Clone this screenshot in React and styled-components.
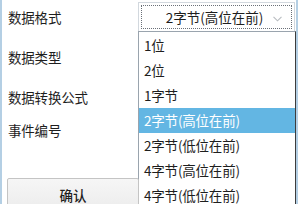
import React from "react";
import styled, { createGlobalStyle } from "styled-components";

const Global = createGlobalStyle`
  html, body { margin: 0; padding: 0; background: #fff; }
  body { font-family: "Noto Sans CJK SC", "Noto Sans", sans-serif; }
`;

const Page = styled.div`
  position: relative;
  width: 298px;
  height: 204px;
  overflow: hidden;
  background: #fff;
  box-sizing: border-box;
  border-left: 2px solid #b4cfe4;
  border-right: 2px solid #b4cfe4;
`;

const Form = styled.div`
  display: grid;
  grid-template-columns: 130px 1fr;
  padding: 2px 1px 0 6px;
`;

const Label = styled.div`
  height: ${(p) => p.h}px;
  display: flex;
  align-items: center;
  font-size: 13.5px;
  color: #1e1e1e;
  letter-spacing: -0.2px;
`;

const Labels = styled.div`
  display: flex;
  flex-direction: column;
`;

const Combo = styled.div`
  position: relative;
  height: 29px;
  box-sizing: border-box;
  border: 1px solid #d2d8de;
  border-bottom: none;
  background: #fff;
  padding: 2px;
`;

const Focus = styled.div`
  height: 100%;
  box-sizing: border-box;
  border: 1px dotted #6a7078;
  display: flex;
  align-items: center;
  justify-content: center;
  padding-right: 4px;
  font-size: 13.5px;
  color: #1e1e1e;
  position: relative;
`;

const Chevron = styled.svg`
  position: absolute;
  right: 9px;
  top: 10px;
`;

const List = styled.div`
  position: absolute;
  left: 136px;
  top: 31px;
  width: 158px;
  box-sizing: border-box;
  border-top: 1px solid #9aa4ae;
  border-left: 1px solid #9aa4ae;
  border-right: 1px solid #3c3c3c;
  background: #fff;
  padding-top: 1px;
`;

const Item = styled.div`
  height: 25px;
  line-height: 25px;
  padding-left: 5px;
  font-size: 13.5px;
  color: ${(p) => (p.active ? "#fff" : "#1e1e1e")};
  background: ${(p) => (p.active ? "#63b6e3" : "transparent")};
  letter-spacing: -0.2px;
  white-space: nowrap;
`;

const Button = styled.button`
  position: absolute;
  left: 5px;
  top: 178px;
  width: 132px;
  height: 36px;
  border: 1px solid #c4c4c4;
  border-radius: 2px;
  background: linear-gradient(#f6f6f6, #ebebeb);
  font-family: "Noto Sans CJK SC", sans-serif;
  font-size: 13.5px;
  font-weight: 500;
  color: #1e1e1e;
  padding: 0 0 2px 0;
`;

const items = [
  "1位",
  "2位",
  "1字节",
  "2字节(高位在前)",
  "2字节(低位在前)",
  "4字节(高位在前)",
  "4字节(低位在前)",
];

export default function App() {
  return (
    <>
      <Global />
      <Page>
        <Form>
          <Labels>
            <Label h={29}>数据格式</Label>
            <Label h={52}>数据类型</Label>
            <Label h={28}>数据转换公式</Label>
            <Label h={38}>事件编号</Label>
          </Labels>
          <div>
            <Combo>
              <Focus>
                2字节(高位在前)
                <Chevron width="9" height="6" viewBox="0 0 9 6">
                  <path d="M0.5 0.8 L4.5 4.8 L8.5 0.8" fill="none" stroke="#b8bcc0" strokeWidth="1.1" />
                </Chevron>
              </Focus>
            </Combo>
          </div>
        </Form>
        <List>
          {items.map((t, i) => (
            <Item key={t} active={i === 3}>
              {t}
            </Item>
          ))}
        </List>
        <Button>确认</Button>
      </Page>
    </>
  );
}
